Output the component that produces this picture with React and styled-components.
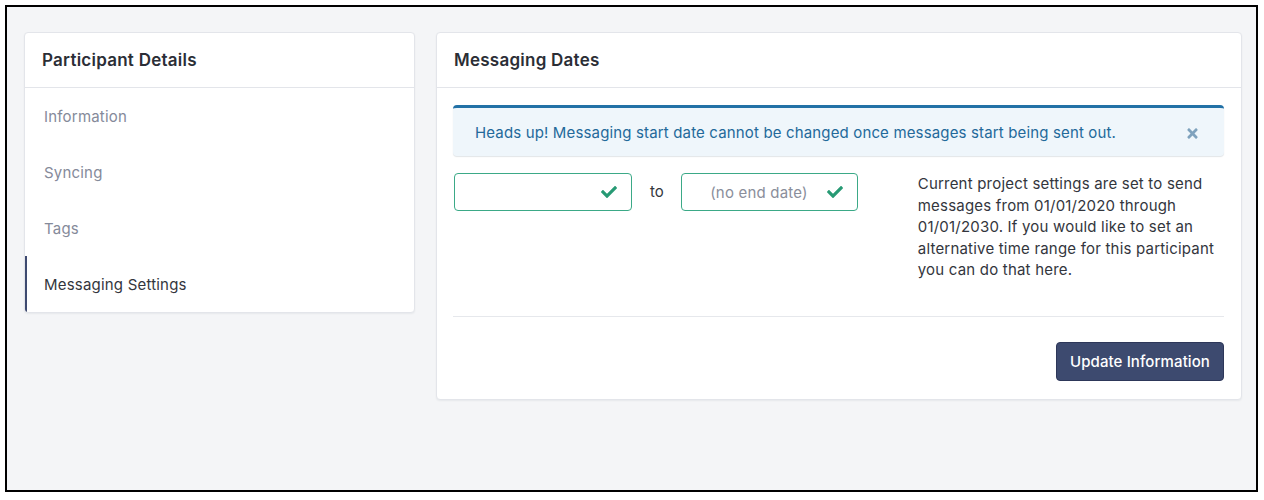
import React from "react";
import styled, { createGlobalStyle } from "styled-components";
import { FaCheck, FaTimes } from "react-icons/fa";

const GlobalStyle = createGlobalStyle`
    body {
        margin: 0;
        background: #ffffff;
        font-family: "Inter", "Noto Sans", "Liberation Sans", sans-serif;
    }
`

const Frame = styled.div`
    box-sizing: border-box;
    margin: 5px;
    width: 1253px;
    height: 487px;
    border: 2px solid #000;
    background: #f4f5f7;
    padding: 25px 14px 0 17px;
    display: flex;
    align-items: flex-start;
    gap: 21px;
`

const Card = styled.div`
    box-sizing: border-box;
    background: #fff;
    border: 1px solid #e3e5ea;
    border-radius: 4px;
    box-shadow: 0 1px 2px rgba(20, 30, 50, 0.06);
    width: ${props => props.width || "auto"};
    flex: ${props => props.grow ? 1 : "none"};
    overflow: hidden;
`

const CardHeader = styled.div`
    box-sizing: border-box;
    height: 55px;
    display: flex;
    align-items: center;
    padding: 0 17px 1px;
    border-bottom: 1px solid #e3e5ea;
    font-size: 17px;
    letter-spacing: 0.25px;
    font-weight: 600;
    color: #2b2e36;
`

const NavList = styled.div`
    display: flex;
    flex-direction: column;
`

const NavItem = styled.div`
    height: 56px;
    display: flex;
    align-items: center;
    padding-left: 17px;
    margin-left: -1px;
    border-left: 3px solid ${props => props.active ? "#3e4a70" : "transparent"};
    font-size: 15px;
    letter-spacing: 0.2px;
    color: ${props => props.active ? "#33363d" : "#858a9a"};
`

const CardBody = styled.div`
    padding: 17px 17px 18px 16px;
`

const Alert = styled.div`
    box-sizing: border-box;
    height: 51px;
    display: flex;
    align-items: center;
    justify-content: space-between;
    padding: 0 24px 0 22px;
    background: #eff6fb;
    border-top: 3px solid #2271a6;
    border-radius: 4px;
    box-shadow: 0 1px 1px rgba(20, 40, 60, 0.12);
    color: #23699a;
    font-size: 15px;
    letter-spacing: 0.15px;
`

const CloseIcon = styled(FaTimes)`
    color: #7fa2bd;
    font-size: 15px;
    margin-top: 3px;
`

const FormRow = styled.div`
    display: flex;
    align-items: flex-start;
    margin-top: 17px;
    padding-left: 1px;
`

const DateInput = styled.div`
    box-sizing: border-box;
    width: ${props => props.width};
    height: 38px;
    border: 1.5px solid #3ba987;
    border-radius: 4px;
    display: flex;
    align-items: center;
    justify-content: flex-end;
    gap: 19px;
    padding-right: 14px;
    font-size: 15px;
    letter-spacing: 0.2px;
    color: #8a8e9b;
`

const CheckIcon = styled(FaCheck)`
    color: #279a74;
    font-size: 16px;
`

const ToLabel = styled.span`
    line-height: 38px;
    margin: 0 17px 0 18px;
    font-size: 15px;
    color: #33363d;
`

const Description = styled.p`
    margin: 0 0 0 60px;
    width: 300px;
    font-size: 15px;
    letter-spacing: 0.2px;
    line-height: 21.6px;
    color: #33363d;
`

const Divider = styled.hr`
    border: none;
    border-top: 1px solid #e6e8ec;
    margin: 35px 0 0 0;
`

const Actions = styled.div`
    display: flex;
    justify-content: flex-end;
    margin-top: 25px;
`

const PrimaryButton = styled.button`
    box-sizing: border-box;
    width: 168px;
    height: 39px;
    background: #3d4a6f;
    border: 1px solid #2d3759;
    border-radius: 4px;
    color: #fff;
    font-family: inherit;
    font-size: 15px;
    letter-spacing: 0.1px;
    font-weight: 500;
`

const navItems = ["Information", "Syncing", "Tags", "Messaging Settings"];

function App() {
    return (
        <>
            <GlobalStyle />
            <Frame>
                <Card width="391px">
                    <CardHeader>Participant Details</CardHeader>
                    <NavList>
                        {navItems.map(item => (
                            <NavItem key={item} active={item === "Messaging Settings"}>{item}</NavItem>
                        ))}
                    </NavList>
                </Card>
                <Card grow>
                    <CardHeader>Messaging Dates</CardHeader>
                    <CardBody>
                        <Alert>
                            <span>Heads up! Messaging start date cannot be changed once messages start being sent out.</span>
                            <CloseIcon />
                        </Alert>
                        <FormRow>
                            <DateInput width="178px">
                                <CheckIcon />
                            </DateInput>
                            <ToLabel>to</ToLabel>
                            <DateInput width="177px">
                                <span>(no end date)</span>
                                <CheckIcon />
                            </DateInput>
                            <Description>
                                Current project settings are set to send messages from 01/01/2020 through
                                01/01/2030. If you would like to set an alternative time range for this participant
                                you can do that here.
                            </Description>
                        </FormRow>
                        <Divider />
                        <Actions>
                            <PrimaryButton>Update Information</PrimaryButton>
                        </Actions>
                    </CardBody>
                </Card>
            </Frame>
        </>
    );
}

export default App;
